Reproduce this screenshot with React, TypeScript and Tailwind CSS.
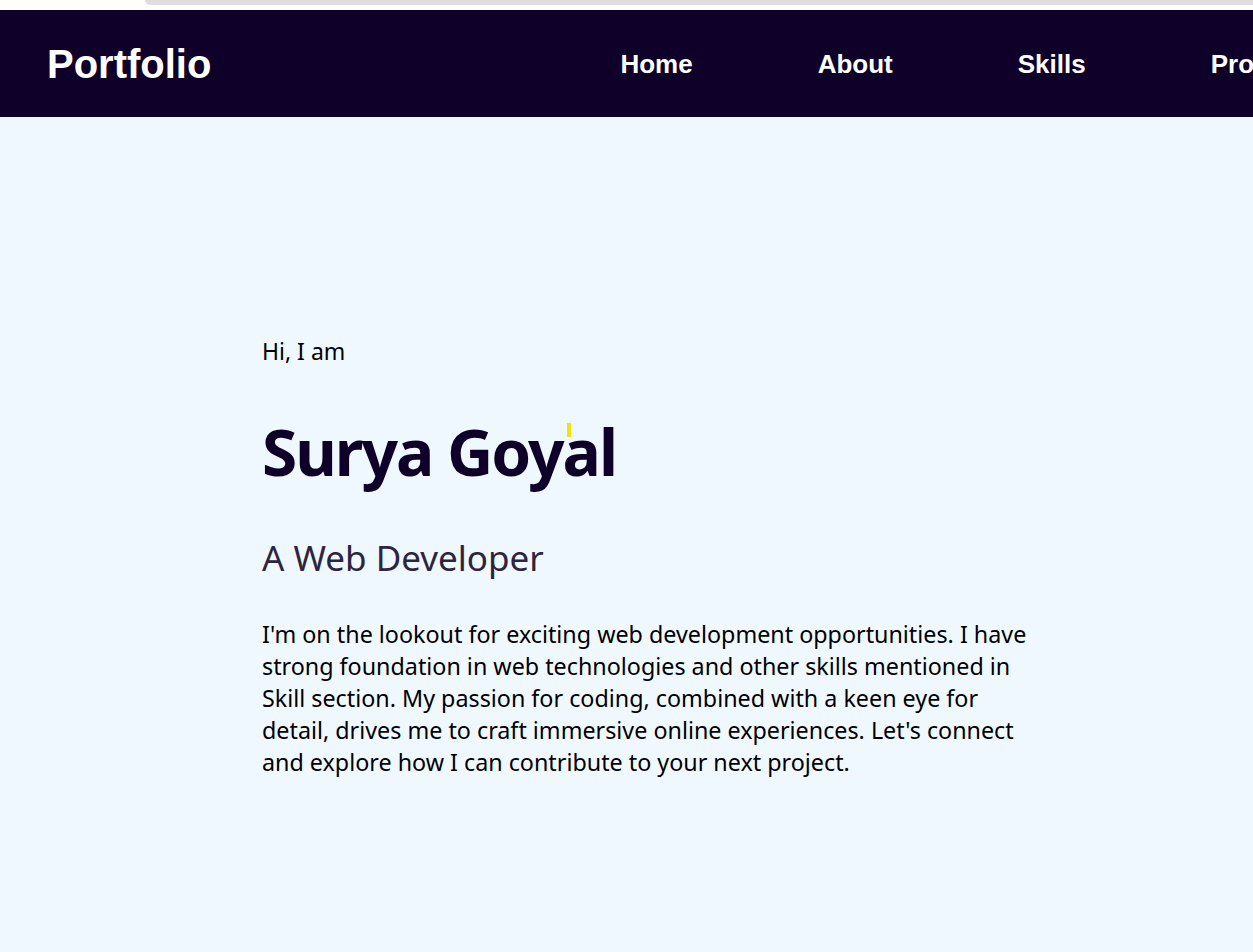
const navLinks = ["Home", "About", "Skills", "Projects", "Contact"];

const Navbar = () => {
  return (
    <nav className="h-[107px] bg-[#0e0029] flex items-center overflow-hidden whitespace-nowrap font-['Liberation_Sans',Arial,sans-serif] font-bold text-white">
      <h1 className="ml-[47px] mt-[1px] text-[40px] leading-none shrink-0">Portfolio</h1>
      <ul className="flex items-center gap-[125px] ml-[409px] mt-[2px] text-[26px] shrink-0">
        {navLinks.map((link) => (
          <li key={link} className="cursor-pointer">
            {link}
          </li>
        ))}
      </ul>
    </nav>
  );
};

const Hero = () => {
  return (
    <section className="pl-[262px] pt-[218px] pb-[160px] font-['Noto_Sans',sans-serif]">
      <p className="text-[23px] leading-[32px] text-black">Hi, I am</p>
      <h2 className="mt-[45px] text-[64px] leading-[80px] tracking-[-2px] font-bold text-[#0e0029]">
        Surya Goy
        <span className="relative inline-block w-0">
          <span className="absolute left-[4px] top-[-53px] w-[4px] h-[14px] bg-[#f2e600]" />
        </span>
        al
      </h2>
      <h3 className="mt-[44px] text-[35px] leading-[44px] text-[#2d2440]">
        A Web Developer
      </h3>
      <p className="mt-[38px] w-[776px] text-[23.3px] leading-[32px] text-black">
        I'm on the lookout for exciting web development opportunities. I have
        strong foundation in web technologies and other skills mentioned in
        Skill section. My passion for coding, combined with a keen eye for
        detail, drives me to craft immersive online experiences. Let's connect
        and explore how I can contribute to your next project.
      </p>
    </section>
  );
};

const App = () => {
  return (
    <div className="min-h-screen bg-[#f0f8ff]">
      <div className="h-[10px] bg-white">
        <div className="ml-[145px] h-[5px] bg-[#dedede] rounded-bl-[10px]" />
      </div>
      <Navbar />
      <Hero />
    </div>
  );
};

export default App;
